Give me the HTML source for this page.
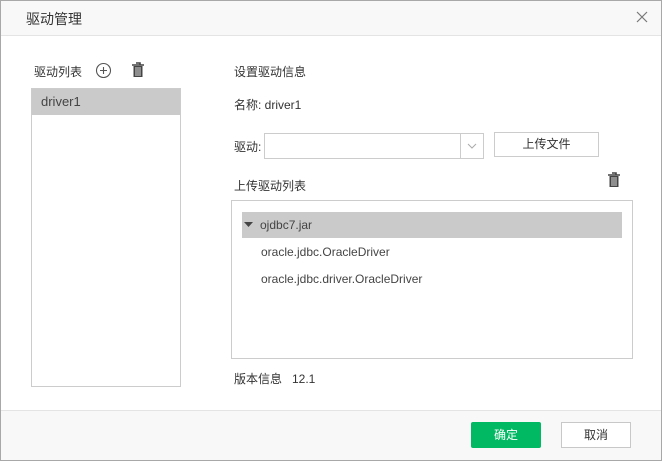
<!DOCTYPE html>
<html><head><meta charset="utf-8"><style>
*{box-sizing:border-box;margin:0;padding:0}
body{width:662px;height:461px;position:relative;font-family:"Liberation Sans","Noto Sans CJK SC",sans-serif;font-size:12px;color:#333;background:#fff;overflow:hidden}
.frame{position:absolute;left:0;top:0;width:662px;height:461px;border:1px solid #a8a8a8}
.hd{position:absolute;left:1px;top:1px;width:660px;height:35px;background:#f8f8f8;border-bottom:1px solid #e4e4e4}
.ft{position:absolute;left:1px;top:410px;width:660px;height:50px;background:#f8f8f8;border-top:1px solid #e4e4e4}
.a{position:absolute;white-space:nowrap}
.box{position:absolute;border:1px solid #ccc;background:#fff}
</style></head><body>
<div class="frame"></div>
<div class="hd"></div>
<div class="a" style="left:26px;top:9px;font-size:14px;color:#333">驱动管理</div>
<svg class="a" style="left:636px;top:11px" width="12" height="12"><path d="M1 1L11 11M11 1L1 11" stroke="#777" stroke-width="1.2"/></svg>

<div class="a" style="left:34px;top:63px">驱动列表</div>
<svg class="a" style="left:95px;top:62px" width="17" height="17"><circle cx="8.5" cy="8.5" r="7" fill="none" stroke="#555" stroke-width="1.1"/><path d="M8.5 5V12M5 8.5H12" stroke="#555" stroke-width="1.1"/></svg>
<svg class="a" style="left:131px;top:62px" width="14" height="16"><path d="M1 3H13M5 1H9V3" stroke="#444" stroke-width="1.6" fill="none"/><rect x="2.5" y="4" width="9" height="11" fill="#444"/><path d="M5 5V14M7 5V14M9 5V14" stroke="#fff" stroke-width="0.8"/></svg>
<div class="box" style="left:31px;top:88px;width:150px;height:299px"></div>
<div class="a" style="left:32px;top:89px;width:148px;height:26px;background:#cacaca;padding:5px 9px;font-size:13px;color:#444">driver1</div>

<div class="a" style="left:234px;top:63px">设置驱动信息</div>
<div class="a" style="left:234px;top:96px">名称: driver1</div>
<div class="a" style="left:234px;top:138px">驱动:</div>
<div class="box" style="left:264px;top:133px;width:220px;height:26px"></div>
<div class="a" style="left:460px;top:134px;width:1px;height:24px;background:#ccc"></div>
<svg class="a" style="left:466px;top:142px" width="12" height="8"><path d="M2 2L6 6L10 2" stroke="#aaa" fill="none"/></svg>
<div class="box" style="left:494px;top:132px;width:105px;height:25px;text-align:center;line-height:23px">上传文件</div>
<div class="a" style="left:234px;top:177px">上传驱动列表</div>
<svg class="a" style="left:607px;top:172px" width="14" height="16"><path d="M1 3H13M5 1H9V3" stroke="#444" stroke-width="1.6" fill="none"/><rect x="2.5" y="4" width="9" height="11" fill="#444"/><path d="M5 5V14M7 5V14M9 5V14" stroke="#fff" stroke-width="0.8"/></svg>
<div class="box" style="left:231px;top:200px;width:402px;height:159px"></div>
<div class="a" style="left:242px;top:212px;width:380px;height:26px;background:#cacaca"></div>
<svg class="a" style="left:244px;top:221px" width="10" height="8"><path d="M0 1H9L4.5 6Z" fill="#444"/></svg>
<div class="a" style="left:260px;top:218px;color:#444">ojdbc7.jar</div>
<div class="a" style="left:261px;top:245px;color:#444">oracle.jdbc.OracleDriver</div>
<div class="a" style="left:261px;top:272px;color:#444">oracle.jdbc.driver.OracleDriver</div>
<div class="a" style="left:234px;top:370px">版本信息 &nbsp;&nbsp;12.1</div>

<div class="ft"></div>
<div class="a" style="left:471px;top:422px;width:70px;height:26px;background:#00b962;border-radius:2px;color:#fff;text-align:center;line-height:26px">确定</div>
<div class="box" style="left:561px;top:422px;width:70px;height:26px;text-align:center;line-height:24px;border-color:#c8c8c8">取消</div>
</body></html>
